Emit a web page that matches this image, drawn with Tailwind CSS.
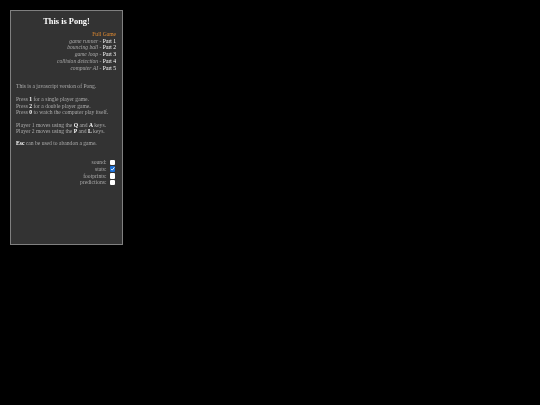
<!DOCTYPE html>
<html lang="en">
<head>
  <meta charset="UTF-8" />
  <title>Pong</title>
  <script src="https://cdn.jsdelivr.net/npm/@tailwindcss/browser@4"></script>
</head>
<body class="bg-black min-h-screen font-['Liberation_Serif',serif] antialiased">
<div class="pt-[10px] pl-[10px]">
  <!-- Sidebar -->
  <div class="w-[113px] h-[235px] border border-[#808080] bg-[#333333] px-[5px] text-[5.6px] leading-[6.7px] text-[#aaaaaa]">
    <div class="blur-[0.25px]">
      <h1 class="mt-[6px] mb-[4px] text-center text-[8.4px] leading-[10px] font-bold text-white">This is Pong!</h1>
      <ul class="text-right pr-[1px]">
        <li class="text-[#e08a30]">Full Game</li>
        <li><i>game runner</i> - <span class="text-white">Part 1</span></li>
        <li><i>bouncing ball</i> - <span class="text-white">Part 2</span></li>
        <li><i>game loop</i> - <span class="text-white">Part 3</span></li>
        <li><i>collision detection</i> - <span class="text-white">Part 4</span></li>
        <li><i>computer AI</i> - <span class="text-white">Part 5</span></li>
      </ul>
      <p class="mt-[12px]">This is a javascript version of Pong.</p>
      <p class="mt-[6px]">
        Press <b class="text-white">1</b> for a single player game.<br />
        Press <b class="text-white">2</b> for a double player game.<br />
        Press <b class="text-white">0</b> to watch the computer play itself.
      </p>
      <p class="mt-[5.5px]">
        Player 1 moves using the <b class="text-white">Q</b> and <b class="text-white">A</b> keys.<br />
        Player 2 moves using the <b class="text-white">P</b> and <b class="text-white">L</b> keys.
      </p>
      <p class="mt-[5.5px]"><b class="text-white">Esc</b> can be used to abandon a game.</p>
      <div class="mt-[12px] flex flex-col">
        <label class="flex justify-end items-center h-[6.7px] gap-[3px] pr-[2px]">sound: <input type="checkbox" class="w-[5.5px] h-[5.5px] appearance-none bg-white rounded-[1px]" /></label>
        <label class="flex justify-end items-center h-[6.7px] gap-[3px] pr-[2px]">stats:
          <span class="w-[5.5px] h-[5.5px] bg-[#1a6fd6] flex items-center justify-center rounded-[1px]">
            <svg viewBox="0 0 6 6" class="w-[5.5px] h-[5.5px]"><path d="M1.2 3.2 L2.5 4.5 L4.8 1.4" fill="none" stroke="#ffffff" stroke-width="1" /></svg>
          </span>
        </label>
        <label class="flex justify-end items-center h-[6.7px] gap-[3px] pr-[2px]">footprints: <input type="checkbox" class="w-[5.5px] h-[5.5px] appearance-none bg-white rounded-[1px]" /></label>
        <label class="flex justify-end items-center h-[6.7px] gap-[3px] pr-[2px]">predictions: <input type="checkbox" class="w-[5.5px] h-[5.5px] appearance-none bg-white rounded-[1px]" /></label>
      </div>
    </div>
  </div>
</div>
</body>
</html>
